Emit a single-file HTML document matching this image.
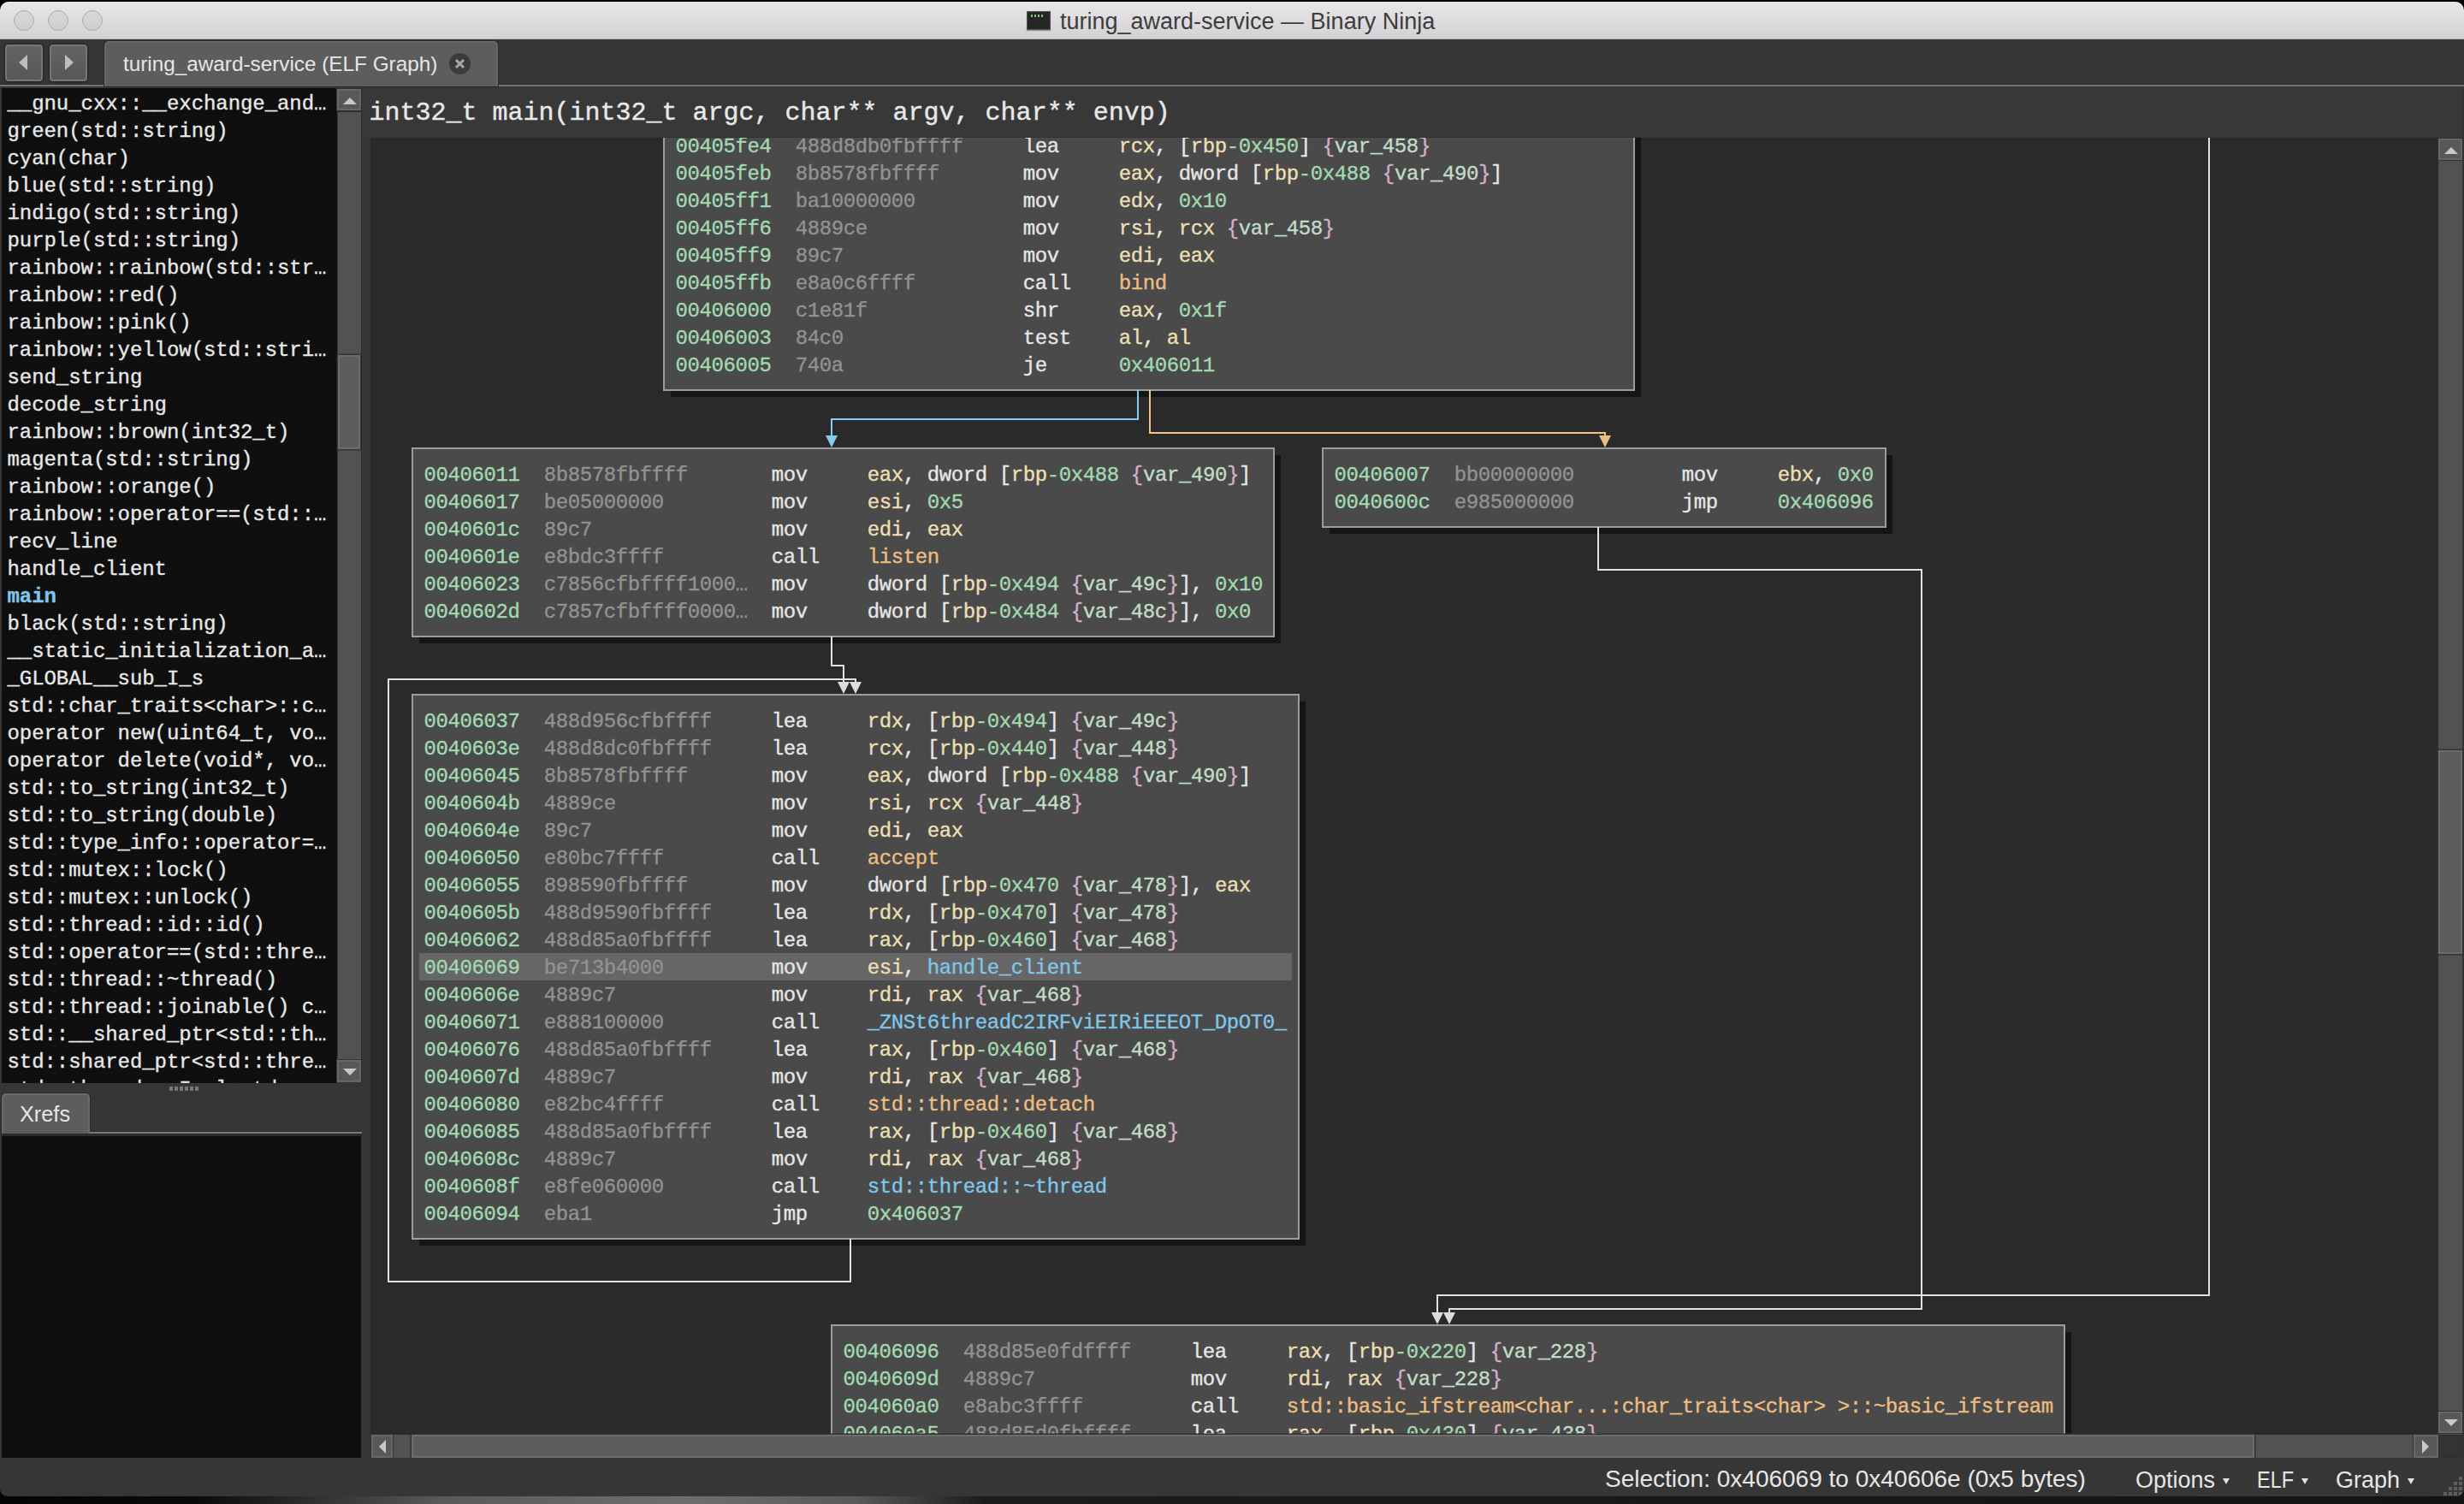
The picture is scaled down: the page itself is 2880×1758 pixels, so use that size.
<!DOCTYPE html>
<html><head><meta charset="utf-8">
<style>
*{margin:0;padding:0;box-sizing:border-box}
html,body{width:2880px;height:1758px;overflow:hidden;background:#000}
body{position:relative;font-family:"Liberation Sans",sans-serif}
.abs{position:absolute}
.mono{font-family:"Liberation Mono",monospace}
#desk{position:absolute;left:0;top:1740px;width:2880px;height:18px;
 background:linear-gradient(90deg,#050505 0px,#0a0a0a 230px,#5a5a5a 520px,#6e6e6e 800px,#5a5a5a 1000px,#1c1c1c 1150px,#141414 2880px)}
#win{position:absolute;left:0;top:2px;width:2880px;height:1747px;background:#363636;border-radius:10px 10px 9px 9px;overflow:hidden}
#title{position:absolute;left:0;top:0;width:2880px;height:44px;background:linear-gradient(#e9e7e9,#d3d1d3);border-bottom:1px solid #b9b9b9}
.tl{position:absolute;top:10px;width:24px;height:24px;border-radius:50%;background:linear-gradient(#d8d8d8,#cfcfcf);border:1px solid #a9a9a9}
#ttext{position:absolute;left:1239px;top:6px;font-size:27px;line-height:34px;color:#3d3d3d;white-space:pre}
#ticon{position:absolute;left:1200px;top:11px;width:28px;height:22px;background:#262626;border:1px solid #555;box-shadow:0 1px 1px rgba(0,0,0,.3)}
#tabbar{position:absolute;left:0;top:44px;width:2880px;height:56px;background:#363636}
.nav{position:absolute;top:6px;width:44px;height:43px;background:linear-gradient(#646464,#575757);border:2px solid #767676;border-radius:4px;box-shadow:0 0 0 1.5px #262626}
#tab{position:absolute;left:122px;top:2px;width:460px;height:53px;background:#5d5d5d;border:2px solid #676767;border-bottom:none;border-radius:5px 5px 0 0;box-shadow:0 0 0 1px #2a2a2a}
#tabtext{position:absolute;left:20px;top:10px;font-size:24.3px;line-height:30px;color:#e6e6e6;white-space:pre}
#tabclose{position:absolute;left:401px;top:12px;width:25px;height:25px;border-radius:50%;background:#3b3b3b}
#tabline{position:absolute;left:0;top:53px;width:2880px;height:2px;background:#757575;box-shadow:0 -1px 0 #2c2c2c}
#list{position:absolute;left:2px;top:101px;width:392px;height:1163px;background:#0f0f0f;overflow:hidden}
.fi{position:absolute;left:6.5px;margin-top:1px;height:32px;line-height:36px;font-family:"Liberation Mono",monospace;font-size:24px;letter-spacing:-0.06px;-webkit-text-stroke:0.35px;color:#e8e8e8;white-space:pre}
.fi.main{color:#80c6e9;font-weight:bold}
.sb{position:absolute;background:#525252}
.sbtn{position:absolute;background:#585858;border:2px solid #676767;box-shadow:0 0 0 1px #333}
.sh{position:absolute;background:#5d5d5d;border:2px solid #6c6c6c;box-shadow:0 0 0 1.5px #333}
#hdr{position:absolute;left:423px;top:101px;width:2457px;height:58px;background:#383838}
#hdrtext{position:absolute;left:8.5px;top:13px;font-family:"Liberation Mono",monospace;font-size:30px;line-height:32px;color:#e8e8e8;white-space:pre;-webkit-text-stroke:0.4px}
#view{position:absolute;left:433px;top:159px;width:2417px;height:1516px;background:#2a2a2a;overflow:hidden;box-shadow:-1px -1px 0 #333}
#canvas{position:absolute;left:-433px;top:-161px;width:2880px;height:1758px}
.blk{position:absolute;background:#4a4a4a;border:2px solid #9c9c9c;box-shadow:8px 8px 0 -1px #151515}
.r{position:absolute;left:7px;right:7px;height:32px;padding-left:5.6px;line-height:36px;font-family:"Liberation Mono",monospace;font-size:24px;letter-spacing:-0.4px;-webkit-text-stroke:0.35px;white-space:pre;color:#e6e6e6}
.r.hl{background:#666666}
.ln{position:absolute}
.ar{position:absolute;overflow:visible}
#status{position:absolute;left:0;top:1702px;width:2880px;height:45px;background:#363636}
.st{position:absolute;top:9px;font-size:27px;line-height:34px;color:#e6e6e6;white-space:pre}
.tri{display:inline-block;width:0;height:0;border-left:4.5px solid transparent;border-right:4.5px solid transparent;border-top:7px solid #e0e0e0;vertical-align:middle;margin-left:9px;position:relative;top:0px}
</style></head><body>
<div id="desk"></div>
<div id="win">
 <div id="title">
  <div class="tl" style="left:16px"></div><div class="tl" style="left:56px"></div><div class="tl" style="left:96px"></div>
  <div id="ticon"><div style="position:absolute;left:4px;top:3px;width:14px;height:3px;background:repeating-linear-gradient(90deg,#6fcf5f 0 2px,transparent 2px 4px)"></div></div>
  <div id="ttext">turing_award-service — Binary Ninja</div>
 </div>
 <div id="tabbar">
  <div class="nav" style="left:6px"><svg width="44" height="42" style="position:absolute;left:-1px;top:-1px"><polygon points="15,20 25,11 25,29" fill="#bdbdbd"/></svg></div>
  <div class="nav" style="left:58px"><svg width="44" height="42" style="position:absolute;left:-1px;top:-1px"><polygon points="27,20 17,11 17,29" fill="#bdbdbd"/></svg></div>
  <div id="tabline"></div>
  <div id="tab"><div id="tabtext">turing_award-service (ELF Graph)</div>
   <div id="tabclose"><svg width="25" height="25"><path d="M8 8 L17 17 M17 8 L8 17" stroke="#a8a8a8" stroke-width="3"/></svg></div></div>
 </div>
 <div id="list">
<div class="fi" style="top:0px">__gnu_cxx::__exchange_and…</div>
<div class="fi" style="top:32px">green(std::string)</div>
<div class="fi" style="top:64px">cyan(char)</div>
<div class="fi" style="top:96px">blue(std::string)</div>
<div class="fi" style="top:128px">indigo(std::string)</div>
<div class="fi" style="top:160px">purple(std::string)</div>
<div class="fi" style="top:192px">rainbow::rainbow(std::str…</div>
<div class="fi" style="top:224px">rainbow::red()</div>
<div class="fi" style="top:256px">rainbow::pink()</div>
<div class="fi" style="top:288px">rainbow::yellow(std::stri…</div>
<div class="fi" style="top:320px">send_string</div>
<div class="fi" style="top:352px">decode_string</div>
<div class="fi" style="top:384px">rainbow::brown(int32_t)</div>
<div class="fi" style="top:416px">magenta(std::string)</div>
<div class="fi" style="top:448px">rainbow::orange()</div>
<div class="fi" style="top:480px">rainbow::operator==(std::…</div>
<div class="fi" style="top:512px">recv_line</div>
<div class="fi" style="top:544px">handle_client</div>
<div class="fi main" style="top:576px">main</div>
<div class="fi" style="top:608px">black(std::string)</div>
<div class="fi" style="top:640px">__static_initialization_a…</div>
<div class="fi" style="top:672px">_GLOBAL__sub_I_s</div>
<div class="fi" style="top:704px">std::char_traits&lt;char&gt;::c…</div>
<div class="fi" style="top:736px">operator new(uint64_t, vo…</div>
<div class="fi" style="top:768px">operator delete(void*, vo…</div>
<div class="fi" style="top:800px">std::to_string(int32_t)</div>
<div class="fi" style="top:832px">std::to_string(double)</div>
<div class="fi" style="top:864px">std::type_info::operator=…</div>
<div class="fi" style="top:896px">std::mutex::lock()</div>
<div class="fi" style="top:928px">std::mutex::unlock()</div>
<div class="fi" style="top:960px">std::thread::id::id()</div>
<div class="fi" style="top:992px">std::operator==(std::thre…</div>
<div class="fi" style="top:1024px">std::thread::~thread()</div>
<div class="fi" style="top:1056px">std::thread::joinable() c…</div>
<div class="fi" style="top:1088px">std::__shared_ptr&lt;std::th…</div>
<div class="fi" style="top:1120px">std::shared_ptr&lt;std::thre…</div>
<div class="fi" style="top:1152px">std::thread::_Impl&lt;std::_…</div>
 </div>
 <!-- sidebar scrollbar -->
 <div class="sb" style="left:394px;top:101px;width:28px;height:1163px;border-left:1px solid #3a3a3a"></div>
 <div class="sbtn" style="left:394px;top:102px;width:28px;height:25px"><svg width="26" height="23" style="position:absolute;left:0;top:0"><polygon points="5,16 21,16 13,8" fill="#c8c8c8"/></svg></div>
 <div class="abs" style="left:394px;top:127px;width:28px;height:2px;background:#2e2e2e"></div>
 <div class="sh" style="left:395px;top:413px;width:26px;height:110px"></div>
 <div class="sbtn" style="left:394px;top:1237px;width:28px;height:26px"><svg width="26" height="24" style="position:absolute;left:0;top:0"><polygon points="5,8 21,8 13,16" fill="#c8c8c8"/></svg></div>
 <div class="abs" style="left:198px;top:1268px;width:34px;height:5px;background:repeating-linear-gradient(90deg,#777 0 4px,transparent 4px 6px)"></div>
 <!-- xrefs -->
 <div class="abs" style="left:2px;top:1276px;width:103px;height:47px;background:#5d5d5d;border:2px solid #6a6a6a;border-bottom:none;border-radius:5px 5px 0 0;box-shadow:0 0 0 1px #2a2a2a"></div>
 <div class="abs" style="left:23px;top:1283px;font-size:25.3px;line-height:34px;color:#e6e6e6">Xrefs</div>
 <div class="abs" style="left:105px;top:1320px;width:318px;height:1px;background:#2c2c2c"></div>
 <div class="abs" style="left:105px;top:1321px;width:318px;height:2px;background:#7a7a7a"></div>
 <div class="abs" style="left:2px;top:1323px;width:421px;height:3px;background:#2a2a2a"></div>
 <div class="abs" style="left:2px;top:1326px;width:420px;height:376px;background:#0f0f0f"></div>
 <!-- header -->
 <div id="hdr"><div id="hdrtext">int32_t main(int32_t argc, char** argv, char** envp)</div></div>
 <div class="abs" style="left:422px;top:101px;width:1px;height:1163px;background:#2c2c2c"></div>
 <!-- graph -->
 <div id="view"><div id="canvas">
<div class="blk" style="left:775px;top:107px;width:1136px;height:350px">
<div class="r" style="top:13px"><span style="color:#a2d9af">00405fdd</span>  <span style="color:#929292">488d8db0fbffff     </span><span style="color:#e6e6e6">mov     </span><span style="color:#e6e6e6">qword</span><span style="color:#e6e6e6"> </span><span style="color:#e6e6e6">[</span><span style="color:#eddfb3">rbp</span><span style="color:#a2d9af">-0x4a0</span><span style="color:#e6e6e6"> </span><span style="color:#d4aec8">{</span><span style="color:#c1dcc7">var_4a8</span><span style="color:#d4aec8">}</span><span style="color:#e6e6e6">]</span><span style="color:#e6e6e6">,</span><span style="color:#e6e6e6"> </span><span style="color:#eddfb3">rsi</span></div>
<div class="r" style="top:45px"><span style="color:#a2d9af">00405fe4</span>  <span style="color:#929292">488d8db0fbffff     </span><span style="color:#e6e6e6">lea     </span><span style="color:#eddfb3">rcx</span><span style="color:#e6e6e6">,</span><span style="color:#e6e6e6"> </span><span style="color:#e6e6e6">[</span><span style="color:#eddfb3">rbp</span><span style="color:#a2d9af">-0x450</span><span style="color:#e6e6e6">]</span><span style="color:#e6e6e6"> </span><span style="color:#d4aec8">{</span><span style="color:#c1dcc7">var_458</span><span style="color:#d4aec8">}</span></div>
<div class="r" style="top:77px"><span style="color:#a2d9af">00405feb</span>  <span style="color:#929292">8b8578fbffff       </span><span style="color:#e6e6e6">mov     </span><span style="color:#eddfb3">eax</span><span style="color:#e6e6e6">,</span><span style="color:#e6e6e6"> </span><span style="color:#e6e6e6">dword</span><span style="color:#e6e6e6"> </span><span style="color:#e6e6e6">[</span><span style="color:#eddfb3">rbp</span><span style="color:#a2d9af">-0x488</span><span style="color:#e6e6e6"> </span><span style="color:#d4aec8">{</span><span style="color:#c1dcc7">var_490</span><span style="color:#d4aec8">}</span><span style="color:#e6e6e6">]</span></div>
<div class="r" style="top:109px"><span style="color:#a2d9af">00405ff1</span>  <span style="color:#929292">ba10000000         </span><span style="color:#e6e6e6">mov     </span><span style="color:#eddfb3">edx</span><span style="color:#e6e6e6">,</span><span style="color:#e6e6e6"> </span><span style="color:#a2d9af">0x10</span></div>
<div class="r" style="top:141px"><span style="color:#a2d9af">00405ff6</span>  <span style="color:#929292">4889ce             </span><span style="color:#e6e6e6">mov     </span><span style="color:#eddfb3">rsi</span><span style="color:#e6e6e6">,</span><span style="color:#e6e6e6"> </span><span style="color:#eddfb3">rcx</span><span style="color:#e6e6e6"> </span><span style="color:#d4aec8">{</span><span style="color:#c1dcc7">var_458</span><span style="color:#d4aec8">}</span></div>
<div class="r" style="top:173px"><span style="color:#a2d9af">00405ff9</span>  <span style="color:#929292">89c7               </span><span style="color:#e6e6e6">mov     </span><span style="color:#eddfb3">edi</span><span style="color:#e6e6e6">,</span><span style="color:#e6e6e6"> </span><span style="color:#eddfb3">eax</span></div>
<div class="r" style="top:205px"><span style="color:#a2d9af">00405ffb</span>  <span style="color:#929292">e8a0c6ffff         </span><span style="color:#e6e6e6">call    </span><span style="color:#edbd81">bind</span></div>
<div class="r" style="top:237px"><span style="color:#a2d9af">00406000</span>  <span style="color:#929292">c1e81f             </span><span style="color:#e6e6e6">shr     </span><span style="color:#eddfb3">eax</span><span style="color:#e6e6e6">,</span><span style="color:#e6e6e6"> </span><span style="color:#a2d9af">0x1f</span></div>
<div class="r" style="top:269px"><span style="color:#a2d9af">00406003</span>  <span style="color:#929292">84c0               </span><span style="color:#e6e6e6">test    </span><span style="color:#eddfb3">al</span><span style="color:#e6e6e6">,</span><span style="color:#e6e6e6"> </span><span style="color:#eddfb3">al</span></div>
<div class="r" style="top:301px"><span style="color:#a2d9af">00406005</span>  <span style="color:#929292">740a               </span><span style="color:#e6e6e6">je      </span><span style="color:#a2d9af">0x406011</span></div>
</div>
<div class="blk" style="left:481px;top:523px;width:1009px;height:222px">
<div class="r" style="top:13px"><span style="color:#a2d9af">00406011</span>  <span style="color:#929292">8b8578fbffff       </span><span style="color:#e6e6e6">mov     </span><span style="color:#eddfb3">eax</span><span style="color:#e6e6e6">,</span><span style="color:#e6e6e6"> </span><span style="color:#e6e6e6">dword</span><span style="color:#e6e6e6"> </span><span style="color:#e6e6e6">[</span><span style="color:#eddfb3">rbp</span><span style="color:#a2d9af">-0x488</span><span style="color:#e6e6e6"> </span><span style="color:#d4aec8">{</span><span style="color:#c1dcc7">var_490</span><span style="color:#d4aec8">}</span><span style="color:#e6e6e6">]</span></div>
<div class="r" style="top:45px"><span style="color:#a2d9af">00406017</span>  <span style="color:#929292">be05000000         </span><span style="color:#e6e6e6">mov     </span><span style="color:#eddfb3">esi</span><span style="color:#e6e6e6">,</span><span style="color:#e6e6e6"> </span><span style="color:#a2d9af">0x5</span></div>
<div class="r" style="top:77px"><span style="color:#a2d9af">0040601c</span>  <span style="color:#929292">89c7               </span><span style="color:#e6e6e6">mov     </span><span style="color:#eddfb3">edi</span><span style="color:#e6e6e6">,</span><span style="color:#e6e6e6"> </span><span style="color:#eddfb3">eax</span></div>
<div class="r" style="top:109px"><span style="color:#a2d9af">0040601e</span>  <span style="color:#929292">e8bdc3ffff         </span><span style="color:#e6e6e6">call    </span><span style="color:#edbd81">listen</span></div>
<div class="r" style="top:141px"><span style="color:#a2d9af">00406023</span>  <span style="color:#929292">c7856cfbffff1000…  </span><span style="color:#e6e6e6">mov     </span><span style="color:#e6e6e6">dword</span><span style="color:#e6e6e6"> </span><span style="color:#e6e6e6">[</span><span style="color:#eddfb3">rbp</span><span style="color:#a2d9af">-0x494</span><span style="color:#e6e6e6"> </span><span style="color:#d4aec8">{</span><span style="color:#c1dcc7">var_49c</span><span style="color:#d4aec8">}</span><span style="color:#e6e6e6">]</span><span style="color:#e6e6e6">,</span><span style="color:#e6e6e6"> </span><span style="color:#a2d9af">0x10</span></div>
<div class="r" style="top:173px"><span style="color:#a2d9af">0040602d</span>  <span style="color:#929292">c7857cfbffff0000…  </span><span style="color:#e6e6e6">mov     </span><span style="color:#e6e6e6">dword</span><span style="color:#e6e6e6"> </span><span style="color:#e6e6e6">[</span><span style="color:#eddfb3">rbp</span><span style="color:#a2d9af">-0x484</span><span style="color:#e6e6e6"> </span><span style="color:#d4aec8">{</span><span style="color:#c1dcc7">var_48c</span><span style="color:#d4aec8">}</span><span style="color:#e6e6e6">]</span><span style="color:#e6e6e6">,</span><span style="color:#e6e6e6"> </span><span style="color:#a2d9af">0x0</span></div>
</div>
<div class="blk" style="left:1545px;top:523px;width:660px;height:94px">
<div class="r" style="top:13px"><span style="color:#a2d9af">00406007</span>  <span style="color:#929292">bb00000000         </span><span style="color:#e6e6e6">mov     </span><span style="color:#eddfb3">ebx</span><span style="color:#e6e6e6">,</span><span style="color:#e6e6e6"> </span><span style="color:#a2d9af">0x0</span></div>
<div class="r" style="top:45px"><span style="color:#a2d9af">0040600c</span>  <span style="color:#929292">e985000000         </span><span style="color:#e6e6e6">jmp     </span><span style="color:#a2d9af">0x406096</span></div>
</div>
<div class="blk" style="left:481px;top:811px;width:1038px;height:638px">
<div class="r" style="top:13px"><span style="color:#a2d9af">00406037</span>  <span style="color:#929292">488d956cfbffff     </span><span style="color:#e6e6e6">lea     </span><span style="color:#eddfb3">rdx</span><span style="color:#e6e6e6">,</span><span style="color:#e6e6e6"> </span><span style="color:#e6e6e6">[</span><span style="color:#eddfb3">rbp</span><span style="color:#a2d9af">-0x494</span><span style="color:#e6e6e6">]</span><span style="color:#e6e6e6"> </span><span style="color:#d4aec8">{</span><span style="color:#c1dcc7">var_49c</span><span style="color:#d4aec8">}</span></div>
<div class="r" style="top:45px"><span style="color:#a2d9af">0040603e</span>  <span style="color:#929292">488d8dc0fbffff     </span><span style="color:#e6e6e6">lea     </span><span style="color:#eddfb3">rcx</span><span style="color:#e6e6e6">,</span><span style="color:#e6e6e6"> </span><span style="color:#e6e6e6">[</span><span style="color:#eddfb3">rbp</span><span style="color:#a2d9af">-0x440</span><span style="color:#e6e6e6">]</span><span style="color:#e6e6e6"> </span><span style="color:#d4aec8">{</span><span style="color:#c1dcc7">var_448</span><span style="color:#d4aec8">}</span></div>
<div class="r" style="top:77px"><span style="color:#a2d9af">00406045</span>  <span style="color:#929292">8b8578fbffff       </span><span style="color:#e6e6e6">mov     </span><span style="color:#eddfb3">eax</span><span style="color:#e6e6e6">,</span><span style="color:#e6e6e6"> </span><span style="color:#e6e6e6">dword</span><span style="color:#e6e6e6"> </span><span style="color:#e6e6e6">[</span><span style="color:#eddfb3">rbp</span><span style="color:#a2d9af">-0x488</span><span style="color:#e6e6e6"> </span><span style="color:#d4aec8">{</span><span style="color:#c1dcc7">var_490</span><span style="color:#d4aec8">}</span><span style="color:#e6e6e6">]</span></div>
<div class="r" style="top:109px"><span style="color:#a2d9af">0040604b</span>  <span style="color:#929292">4889ce             </span><span style="color:#e6e6e6">mov     </span><span style="color:#eddfb3">rsi</span><span style="color:#e6e6e6">,</span><span style="color:#e6e6e6"> </span><span style="color:#eddfb3">rcx</span><span style="color:#e6e6e6"> </span><span style="color:#d4aec8">{</span><span style="color:#c1dcc7">var_448</span><span style="color:#d4aec8">}</span></div>
<div class="r" style="top:141px"><span style="color:#a2d9af">0040604e</span>  <span style="color:#929292">89c7               </span><span style="color:#e6e6e6">mov     </span><span style="color:#eddfb3">edi</span><span style="color:#e6e6e6">,</span><span style="color:#e6e6e6"> </span><span style="color:#eddfb3">eax</span></div>
<div class="r" style="top:173px"><span style="color:#a2d9af">00406050</span>  <span style="color:#929292">e80bc7ffff         </span><span style="color:#e6e6e6">call    </span><span style="color:#edbd81">accept</span></div>
<div class="r" style="top:205px"><span style="color:#a2d9af">00406055</span>  <span style="color:#929292">898590fbffff       </span><span style="color:#e6e6e6">mov     </span><span style="color:#e6e6e6">dword</span><span style="color:#e6e6e6"> </span><span style="color:#e6e6e6">[</span><span style="color:#eddfb3">rbp</span><span style="color:#a2d9af">-0x470</span><span style="color:#e6e6e6"> </span><span style="color:#d4aec8">{</span><span style="color:#c1dcc7">var_478</span><span style="color:#d4aec8">}</span><span style="color:#e6e6e6">]</span><span style="color:#e6e6e6">,</span><span style="color:#e6e6e6"> </span><span style="color:#eddfb3">eax</span></div>
<div class="r" style="top:237px"><span style="color:#a2d9af">0040605b</span>  <span style="color:#929292">488d9590fbffff     </span><span style="color:#e6e6e6">lea     </span><span style="color:#eddfb3">rdx</span><span style="color:#e6e6e6">,</span><span style="color:#e6e6e6"> </span><span style="color:#e6e6e6">[</span><span style="color:#eddfb3">rbp</span><span style="color:#a2d9af">-0x470</span><span style="color:#e6e6e6">]</span><span style="color:#e6e6e6"> </span><span style="color:#d4aec8">{</span><span style="color:#c1dcc7">var_478</span><span style="color:#d4aec8">}</span></div>
<div class="r" style="top:269px"><span style="color:#a2d9af">00406062</span>  <span style="color:#929292">488d85a0fbffff     </span><span style="color:#e6e6e6">lea     </span><span style="color:#eddfb3">rax</span><span style="color:#e6e6e6">,</span><span style="color:#e6e6e6"> </span><span style="color:#e6e6e6">[</span><span style="color:#eddfb3">rbp</span><span style="color:#a2d9af">-0x460</span><span style="color:#e6e6e6">]</span><span style="color:#e6e6e6"> </span><span style="color:#d4aec8">{</span><span style="color:#c1dcc7">var_468</span><span style="color:#d4aec8">}</span></div>
<div class="r hl" style="top:301px"><span style="color:#a2d9af">00406069</span>  <span style="color:#929292">be713b4000         </span><span style="color:#e6e6e6">mov     </span><span style="color:#eddfb3">esi</span><span style="color:#e6e6e6">, </span><span style="color:#80c6e9">handle_client</span></div>
<div class="r" style="top:333px"><span style="color:#a2d9af">0040606e</span>  <span style="color:#929292">4889c7             </span><span style="color:#e6e6e6">mov     </span><span style="color:#eddfb3">rdi</span><span style="color:#e6e6e6">,</span><span style="color:#e6e6e6"> </span><span style="color:#eddfb3">rax</span><span style="color:#e6e6e6"> </span><span style="color:#d4aec8">{</span><span style="color:#c1dcc7">var_468</span><span style="color:#d4aec8">}</span></div>
<div class="r" style="top:365px"><span style="color:#a2d9af">00406071</span>  <span style="color:#929292">e888100000         </span><span style="color:#e6e6e6">call    </span><span style="color:#80c6e9">_ZNSt6threadC2IRFviEIRiEEEOT_DpOT0_</span></div>
<div class="r" style="top:397px"><span style="color:#a2d9af">00406076</span>  <span style="color:#929292">488d85a0fbffff     </span><span style="color:#e6e6e6">lea     </span><span style="color:#eddfb3">rax</span><span style="color:#e6e6e6">,</span><span style="color:#e6e6e6"> </span><span style="color:#e6e6e6">[</span><span style="color:#eddfb3">rbp</span><span style="color:#a2d9af">-0x460</span><span style="color:#e6e6e6">]</span><span style="color:#e6e6e6"> </span><span style="color:#d4aec8">{</span><span style="color:#c1dcc7">var_468</span><span style="color:#d4aec8">}</span></div>
<div class="r" style="top:429px"><span style="color:#a2d9af">0040607d</span>  <span style="color:#929292">4889c7             </span><span style="color:#e6e6e6">mov     </span><span style="color:#eddfb3">rdi</span><span style="color:#e6e6e6">,</span><span style="color:#e6e6e6"> </span><span style="color:#eddfb3">rax</span><span style="color:#e6e6e6"> </span><span style="color:#d4aec8">{</span><span style="color:#c1dcc7">var_468</span><span style="color:#d4aec8">}</span></div>
<div class="r" style="top:461px"><span style="color:#a2d9af">00406080</span>  <span style="color:#929292">e82bc4ffff         </span><span style="color:#e6e6e6">call    </span><span style="color:#edbd81">std::thread::detach</span></div>
<div class="r" style="top:493px"><span style="color:#a2d9af">00406085</span>  <span style="color:#929292">488d85a0fbffff     </span><span style="color:#e6e6e6">lea     </span><span style="color:#eddfb3">rax</span><span style="color:#e6e6e6">,</span><span style="color:#e6e6e6"> </span><span style="color:#e6e6e6">[</span><span style="color:#eddfb3">rbp</span><span style="color:#a2d9af">-0x460</span><span style="color:#e6e6e6">]</span><span style="color:#e6e6e6"> </span><span style="color:#d4aec8">{</span><span style="color:#c1dcc7">var_468</span><span style="color:#d4aec8">}</span></div>
<div class="r" style="top:525px"><span style="color:#a2d9af">0040608c</span>  <span style="color:#929292">4889c7             </span><span style="color:#e6e6e6">mov     </span><span style="color:#eddfb3">rdi</span><span style="color:#e6e6e6">,</span><span style="color:#e6e6e6"> </span><span style="color:#eddfb3">rax</span><span style="color:#e6e6e6"> </span><span style="color:#d4aec8">{</span><span style="color:#c1dcc7">var_468</span><span style="color:#d4aec8">}</span></div>
<div class="r" style="top:557px"><span style="color:#a2d9af">0040608f</span>  <span style="color:#929292">e8fe060000         </span><span style="color:#e6e6e6">call    </span><span style="color:#80c6e9">std::thread::~thread</span></div>
<div class="r" style="top:589px"><span style="color:#a2d9af">00406094</span>  <span style="color:#929292">eba1               </span><span style="color:#e6e6e6">jmp     </span><span style="color:#a2d9af">0x406037</span></div>
</div>
<div class="blk" style="left:971px;top:1548px;width:1443px;height:190px">
<div class="r" style="top:13px"><span style="color:#a2d9af">00406096</span>  <span style="color:#929292">488d85e0fdffff     </span><span style="color:#e6e6e6">lea     </span><span style="color:#eddfb3">rax</span><span style="color:#e6e6e6">,</span><span style="color:#e6e6e6"> </span><span style="color:#e6e6e6">[</span><span style="color:#eddfb3">rbp</span><span style="color:#a2d9af">-0x220</span><span style="color:#e6e6e6">]</span><span style="color:#e6e6e6"> </span><span style="color:#d4aec8">{</span><span style="color:#c1dcc7">var_228</span><span style="color:#d4aec8">}</span></div>
<div class="r" style="top:45px"><span style="color:#a2d9af">0040609d</span>  <span style="color:#929292">4889c7             </span><span style="color:#e6e6e6">mov     </span><span style="color:#eddfb3">rdi</span><span style="color:#e6e6e6">,</span><span style="color:#e6e6e6"> </span><span style="color:#eddfb3">rax</span><span style="color:#e6e6e6"> </span><span style="color:#d4aec8">{</span><span style="color:#c1dcc7">var_228</span><span style="color:#d4aec8">}</span></div>
<div class="r" style="top:77px"><span style="color:#a2d9af">004060a0</span>  <span style="color:#929292">e8abc3ffff         </span><span style="color:#e6e6e6">call    </span><span style="color:#edbd81">std::basic_ifstream&lt;char...:char_traits&lt;char&gt; &gt;::~basic_ifstream</span></div>
<div class="r" style="top:109px"><span style="color:#a2d9af">004060a5</span>  <span style="color:#929292">488d85d0fbffff     </span><span style="color:#e6e6e6">lea     </span><span style="color:#eddfb3">rax</span><span style="color:#e6e6e6">,</span><span style="color:#e6e6e6"> </span><span style="color:#e6e6e6">[</span><span style="color:#eddfb3">rbp</span><span style="color:#a2d9af">-0x430</span><span style="color:#e6e6e6">]</span><span style="color:#e6e6e6"> </span><span style="color:#d4aec8">{</span><span style="color:#c1dcc7">var_438</span><span style="color:#d4aec8">}</span></div>
<div class="r" style="top:141px"><span style="color:#a2d9af">004060ac</span>  <span style="color:#929292">4889c7             </span><span style="color:#e6e6e6">mov     </span><span style="color:#eddfb3">rdi</span><span style="color:#e6e6e6">,</span><span style="color:#e6e6e6"> </span><span style="color:#eddfb3">rax</span><span style="color:#e6e6e6"> </span><span style="color:#d4aec8">{</span><span style="color:#c1dcc7">var_438</span><span style="color:#d4aec8">}</span></div>
</div>
<div class="ln" style="left:1329px;top:456px;width:2px;height:35px;background:#84cdf5"></div>
<div class="ln" style="left:971px;top:489px;width:360px;height:2px;background:#84cdf5"></div>
<div class="ln" style="left:971px;top:489px;width:2px;height:22px;background:#84cdf5"></div>
<svg class="ar" style="left:965px;top:509px" width="14" height="14"><polygon points="0,0 14,0 7,14" fill="#84cdf5"/></svg>
<div class="ln" style="left:1343px;top:456px;width:2px;height:51px;background:#f2c486"></div>
<div class="ln" style="left:1343px;top:505px;width:534px;height:2px;background:#f2c486"></div>
<div class="ln" style="left:1875px;top:505px;width:2px;height:6px;background:#f2c486"></div>
<svg class="ar" style="left:1869px;top:509px" width="14" height="14"><polygon points="0,0 14,0 7,14" fill="#ebbd82"/></svg>
<div class="ln" style="left:971px;top:744px;width:2px;height:35px;background:#e2e2e2"></div>
<div class="ln" style="left:971px;top:777px;width:16px;height:2px;background:#e2e2e2"></div>
<div class="ln" style="left:985px;top:777px;width:2px;height:22px;background:#e2e2e2"></div>
<svg class="ar" style="left:979px;top:797px" width="14" height="14"><polygon points="0,0 14,0 7,14" fill="#dcdcdc"/></svg>
<div class="ln" style="left:993px;top:1448px;width:2px;height:51px;background:#e2e2e2"></div>
<div class="ln" style="left:453px;top:1497px;width:542px;height:2px;background:#e2e2e2"></div>
<div class="ln" style="left:453px;top:793px;width:2px;height:706px;background:#e2e2e2"></div>
<div class="ln" style="left:453px;top:793px;width:548px;height:2px;background:#e2e2e2"></div>
<div class="ln" style="left:999px;top:793px;width:2px;height:6px;background:#e2e2e2"></div>
<svg class="ar" style="left:993px;top:797px" width="14" height="14"><polygon points="0,0 14,0 7,14" fill="#dcdcdc"/></svg>
<div class="ln" style="left:1867px;top:616px;width:2px;height:51px;background:#e2e2e2"></div>
<div class="ln" style="left:1867px;top:665px;width:380px;height:2px;background:#e2e2e2"></div>
<div class="ln" style="left:2245px;top:665px;width:2px;height:866px;background:#e2e2e2"></div>
<div class="ln" style="left:1693px;top:1529px;width:554px;height:2px;background:#e2e2e2"></div>
<div class="ln" style="left:1693px;top:1529px;width:2px;height:7px;background:#e2e2e2"></div>
<svg class="ar" style="left:1687px;top:1534px" width="14" height="14"><polygon points="0,0 14,0 7,14" fill="#dcdcdc"/></svg>
<div class="ln" style="left:2581px;top:149px;width:2px;height:1366px;background:#e2e2e2"></div>
<div class="ln" style="left:1679px;top:1513px;width:904px;height:2px;background:#e2e2e2"></div>
<div class="ln" style="left:1679px;top:1513px;width:2px;height:23px;background:#e2e2e2"></div>
<svg class="ar" style="left:1673px;top:1534px" width="14" height="14"><polygon points="0,0 14,0 7,14" fill="#dcdcdc"/></svg>
 </div></div>
 <!-- v scrollbar -->
 <div class="sb" style="left:2850px;top:159px;width:28px;height:1516px"></div>
 <div class="sbtn" style="left:2850px;top:160px;width:28px;height:25px"><svg width="26" height="23" style="position:absolute;left:0;top:0"><polygon points="5,16 21,16 13,8" fill="#c8c8c8"/></svg></div>
 <div class="sh" style="left:2850px;top:875px;width:28px;height:238px"></div>
 <div class="sbtn" style="left:2850px;top:1648px;width:28px;height:25px"><svg width="26" height="23" style="position:absolute;left:0;top:0"><polygon points="5,7 21,7 13,15" fill="#c8c8c8"/></svg></div>
 <!-- h scrollbar -->
 <div class="sb" style="left:433px;top:1675px;width:2417px;height:27px"></div>
 <div class="sbtn" style="left:434px;top:1675px;width:25px;height:27px"><svg width="23" height="25" style="position:absolute;left:0;top:0"><polygon points="7,12 15,4 15,20" fill="#c8c8c8"/></svg></div>
 <div class="sh" style="left:481px;top:1675px;width:2154px;height:27px"></div>
 <div class="sbtn" style="left:2821px;top:1675px;width:29px;height:27px"><svg width="27" height="25" style="position:absolute;left:0;top:0"><polygon points="16,12 8,4 8,20" fill="#c8c8c8"/></svg></div>
 <div class="abs" style="left:2850px;top:1675px;width:28px;height:27px;background:#333;box-shadow:inset 0 0 0 1px #2e2e2e"></div>
 <div class="abs" style="left:2878px;top:101px;width:2px;height:1601px;background:#333"></div>
 <!-- status -->
 <div id="status">
  <div class="st" style="left:1876px;font-size:28px;top:8px">Selection: 0x406069 to 0x40606e (0x5 bytes)</div>
  <div class="st" style="left:2496px">Options<span class="tri"></span></div>
  <div class="st" style="left:2638px"><span style="display:inline-block;transform:scaleX(0.87);transform-origin:0 0;width:43px">ELF</span><span class="tri"></span></div>
  <div class="st" style="left:2730px">Graph<span class="tri"></span></div>
 </div>
<div class="abs" style="left:2874px;top:1724px;width:4px;height:4px;background:#5e5e5e"></div>
<div class="abs" style="left:2874px;top:1730px;width:4px;height:4px;background:#5e5e5e"></div>
<div class="abs" style="left:2868px;top:1730px;width:4px;height:4px;background:#5e5e5e"></div>
<div class="abs" style="left:2874px;top:1736px;width:4px;height:4px;background:#5e5e5e"></div>
<div class="abs" style="left:2868px;top:1736px;width:4px;height:4px;background:#5e5e5e"></div>
<div class="abs" style="left:2862px;top:1736px;width:4px;height:4px;background:#5e5e5e"></div>
<div class="abs" style="left:2874px;top:1742px;width:4px;height:4px;background:#5e5e5e"></div>
<div class="abs" style="left:2868px;top:1742px;width:4px;height:4px;background:#5e5e5e"></div>
<div class="abs" style="left:2862px;top:1742px;width:4px;height:4px;background:#5e5e5e"></div>
<div class="abs" style="left:2856px;top:1742px;width:4px;height:4px;background:#5e5e5e"></div>
</div>
</body></html>
